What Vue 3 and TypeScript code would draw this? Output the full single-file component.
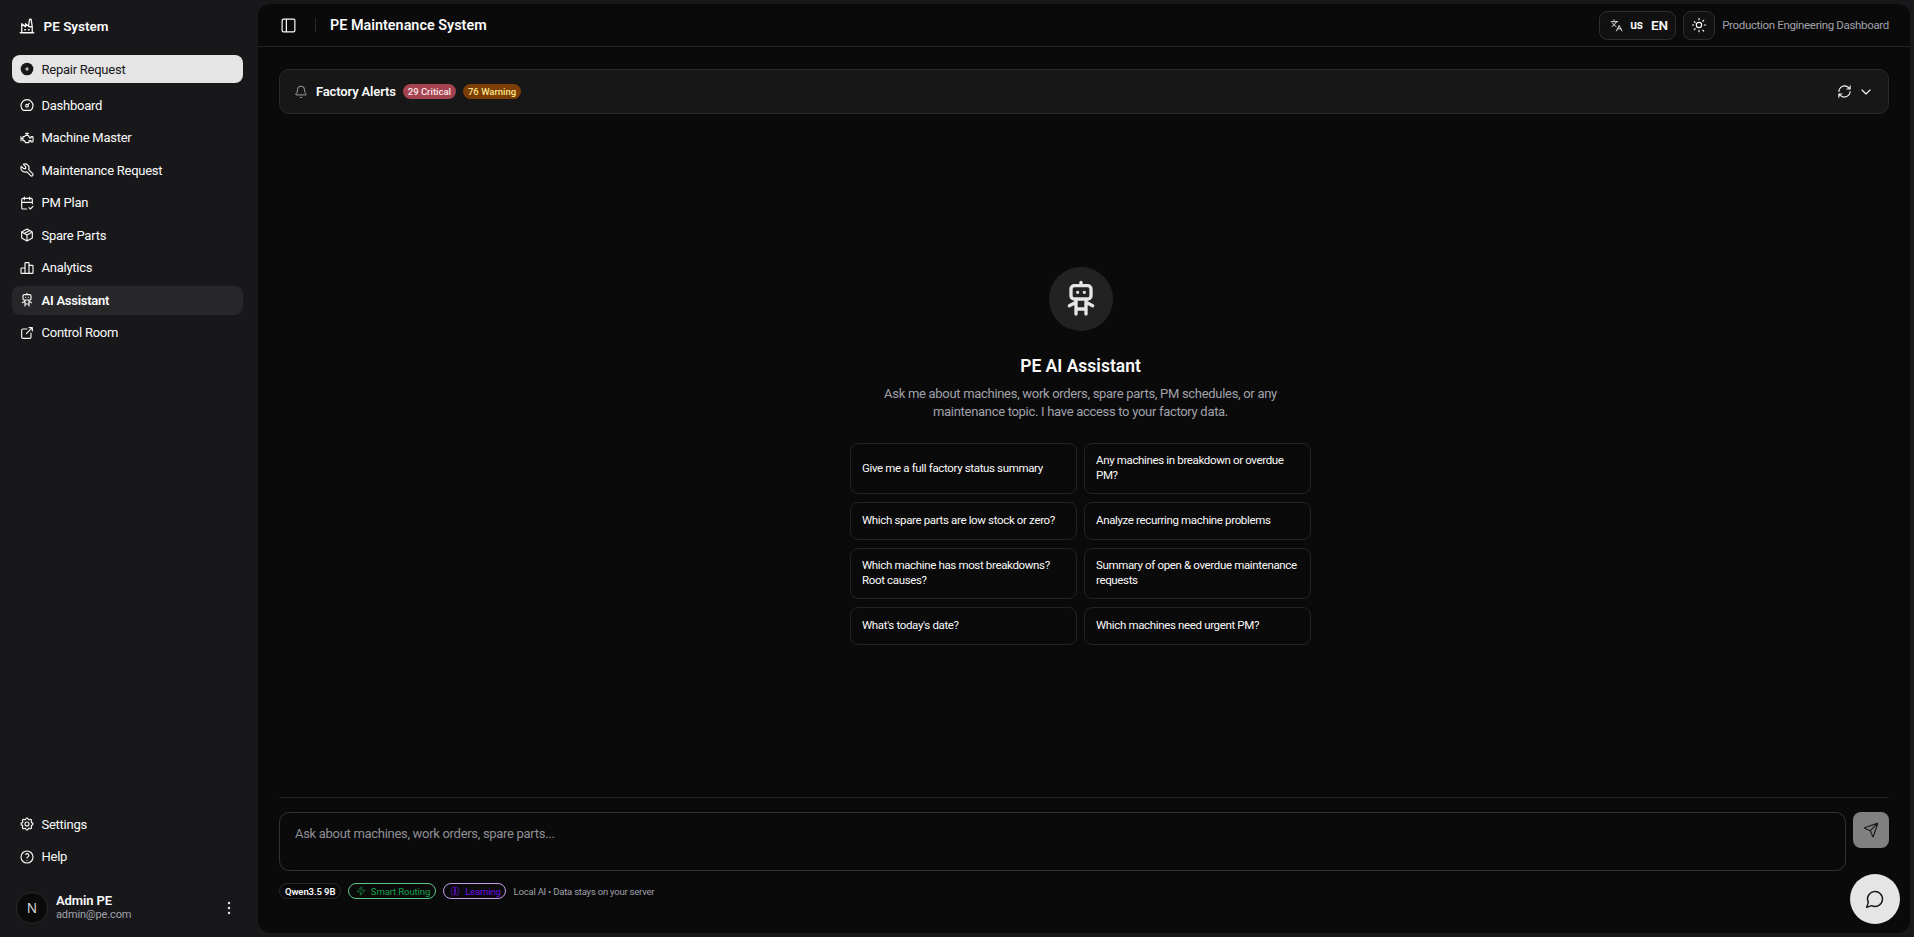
<script setup lang="ts">
const I = {
  factory: 'M3 21h18 M5 21v-12l5 4v-4l5 4h4 M19 21v-8l-1.436 -9.574a.5 .5 0 0 0 -.495 -.426h-1.145a.5 .5 0 0 0 -.494 .418l-1.43 8.582 M9 17h1 M14 17h1',
  dash: 'M10 13a2 2 0 1 0 4 0a2 2 0 0 0 -4 0 M13.45 11.55l2.05 -2.05 M6.4 20a9 9 0 1 1 11.2 0z',
  engine: 'M3 10v6 M12 5v3 M10 5h4 M5 13h-2 M6 10h2l2 -2h3.382a1 1 0 0 1 .894 .553l1.448 2.894a1 1 0 0 0 .894 .553h1.382v-2h2a1 1 0 0 1 1 1v6a1 1 0 0 1 -1 1h-2v-2h-3v2a1 1 0 0 1 -1 1h-3.465a1 1 0 0 1 -.832 -.445l-1.703 -2.555h-2v-6z',
  tool: 'M7 10h3v-3l-3.5 -3.5a6 6 0 0 1 8 8l6 6a2 2 0 0 1 -3 3l-6 -6a6 6 0 0 1 -8 -8l3.5 3.5',
  cal: 'M11.5 21h-5.5a2 2 0 0 1 -2 -2v-12a2 2 0 0 1 2 -2h12a2 2 0 0 1 2 2v6 M16 3v4 M8 3v4 M4 11h16 M15 19l2 2l4 -4',
  pkg: 'M12 3l8 4.5l0 9l-8 4.5l-8 -4.5l0 -9l8 -4.5 M12 12l8 -4.5 M12 12l0 9 M12 12l-8 -4.5 M16 5.25l-8 4.5',
  chart: 'M3 13a1 1 0 0 1 1 -1h4a1 1 0 0 1 1 1v6a1 1 0 0 1 -1 1h-4a1 1 0 0 1 -1 -1z M15 9a1 1 0 0 1 1 -1h4a1 1 0 0 1 1 1v10a1 1 0 0 1 -1 1h-4a1 1 0 0 1 -1 -1z M9 5a1 1 0 0 1 1 -1h4a1 1 0 0 1 1 1v14a1 1 0 0 1 -1 1h-4a1 1 0 0 1 -1 -1z M4 20h14',
  robot: 'M6 6a2 2 0 0 1 2 -2h8a2 2 0 0 1 2 2v4a2 2 0 0 1 -2 2h-8a2 2 0 0 1 -2 -2z M12 2v2 M9 12v9 M15 12v9 M5 16l4 -2 M15 14l4 2 M9 18h6 M10 8v.01 M14 8v.01',
  ext: 'M12 6h-6a2 2 0 0 0 -2 2v10a2 2 0 0 0 2 2h10a2 2 0 0 0 2 -2v-6 M11 13l9 -9 M15 4h5v5',
  gear: 'M10.325 4.317c.426 -1.756 2.924 -1.756 3.35 0a1.724 1.724 0 0 0 2.573 1.066c1.543 -.94 3.31 .826 2.37 2.37a1.724 1.724 0 0 0 1.065 2.572c1.756 .426 1.756 2.924 0 3.35a1.724 1.724 0 0 0 -1.066 2.573c.94 1.543 -.826 3.31 -2.37 2.37a1.724 1.724 0 0 0 -2.572 1.065c-.426 1.756 -2.924 1.756 -3.35 0a1.724 1.724 0 0 0 -2.573 -1.066c-1.543 .94 -3.31 -.826 -2.37 -2.37a1.724 1.724 0 0 0 -1.065 -2.572c-1.756 -.426 -1.756 -2.924 0 -3.35a1.724 1.724 0 0 0 1.066 -2.573c-.94 -1.543 .826 -3.31 2.37 -2.37c1 .608 2.296 .07 2.572 -1.065z M9 12a3 3 0 1 0 6 0a3 3 0 0 0 -6 0',
  help: 'M3 12a9 9 0 1 0 18 0a9 9 0 1 0 -18 0 M12 17v.01 M12 13.5a1.5 1.5 0 0 1 1 -1.5a2.6 2.6 0 1 0 -3 -4',
  panel: 'M5 3h14a2 2 0 0 1 2 2v14a2 2 0 0 1 -2 2h-14a2 2 0 0 1 -2 -2v-14a2 2 0 0 1 2 -2z M9 3v18',
  lang: 'm5 8 6 6 M4 14l6-6 2-3 M2 5h12 M7 2h1 M22 22l-5-10-5 10 M14 18h6',
  sun: 'M8 12a4 4 0 1 0 8 0a4 4 0 1 0 -8 0 M12 2v2 M12 20v2 m-7.07-15.07 1.41 1.41 m11.32 11.32 1.41 1.41 M2 12h2 M20 12h2 m-15.66 5.66-1.41 1.41 M19.07 4.93l-1.41 1.41',
  bell: 'M10.268 21a2 2 0 0 0 3.464 0 M3.262 15.326A1 1 0 0 0 4 17h16a1 1 0 0 0 .74-1.673C19.41 13.956 18 12.499 18 8A6 6 0 0 0 6 8c0 4.499-1.411 5.956-2.738 7.326',
  refresh: 'M3 12a9 9 0 0 1 9-9 9.75 9.75 0 0 1 6.74 2.74L21 8 M21 3v5h-5 M21 12a9 9 0 0 1-9 9 9.75 9.75 0 0 1-6.74-2.74L3 16 M8 16H3v5',
  chev: 'm6 9 6 6 6-6',
  send: 'M14.536 21.686a.5.5 0 0 0 .937-.024l6.5-19a.496.496 0 0 0-.635-.635l-19 6.5a.5.5 0 0 0-.024.937l7.93 3.18a2 2 0 0 1 1.112 1.11z m7.318-19.539-10.94 10.939',
  zap: 'M4 14a1 1 0 0 1-.78-1.63l9.9-10.2a.5.5 0 0 1 .86.46l-1.92 6.02A1 1 0 0 0 13 10h7a1 1 0 0 1 .78 1.63l-9.9 10.2a.5.5 0 0 1-.86-.46l1.92-6.02A1 1 0 0 0 11 14z',
  brain: 'M12 5a3 3 0 1 0-5.997.125 4 4 0 0 0-2.526 5.77 4 4 0 0 0 .556 6.588A4 4 0 1 0 12 18Z M12 5a3 3 0 1 1 5.997.125 4 4 0 0 1 2.526 5.77 4 4 0 0 1-.556 6.588A4 4 0 1 1 12 18Z M15 13a4.5 4.5 0 0 1-3-4 4.5 4.5 0 0 1-3 4',
  msg: 'M7.9 20A9 9 0 1 0 4 16.1L2 22Z'
}

const nav = [
  { label: 'Dashboard', icon: I.dash },
  { label: 'Machine Master', icon: I.engine },
  { label: 'Maintenance Request', icon: I.tool },
  { label: 'PM Plan', icon: I.cal },
  { label: 'Spare Parts', icon: I.pkg },
  { label: 'Analytics', icon: I.chart },
  { label: 'AI Assistant', icon: I.robot, active: true },
  { label: 'Control Room', icon: I.ext }
]
const foot = [
  { label: 'Settings', icon: I.gear },
  { label: 'Help', icon: I.help }
]
const prompts = [
  'Give me a full factory status summary',
  'Any machines in breakdown or overdue PM?',
  'Which spare parts are low stock or zero?',
  'Analyze recurring machine problems',
  'Which machine has most breakdowns? Root causes?',
  'Summary of open & overdue maintenance requests',
  "What's today's date?",
  'Which machines need urgent PM?'
]
</script>

<template>
  <div class="shell">
    <aside class="side">
      <div class="brand">
        <svg class="ic brand-ic" viewBox="0 0 24 24"><path :d="I.factory" /></svg>
        <span>PE System</span>
      </div>
      <button class="repair">
        <svg class="ic" viewBox="0 0 24 24">
          <circle cx="12" cy="12" r="9.5" fill="#18181b" stroke="none" />
          <path d="M12 10v4 M10 12h4" stroke="#e5e5e5" />
        </svg>
        <span>Repair Request</span>
      </button>
      <nav class="nav">
        <a v-for="n in nav" :key="n.label" class="item" :class="{ active: n.active }">
          <svg class="ic" viewBox="0 0 24 24"><path :d="n.icon" /></svg>
          <span>{{ n.label }}</span>
        </a>
      </nav>
      <nav class="nav foot">
        <a v-for="n in foot" :key="n.label" class="item">
          <svg class="ic" viewBox="0 0 24 24"><path :d="n.icon" /></svg>
          <span>{{ n.label }}</span>
        </a>
      </nav>
      <div class="user">
        <div class="avatar">N</div>
        <div class="who">
          <strong>Admin PE</strong>
          <small>admin@pe.com</small>
        </div>
        <svg class="dots" viewBox="0 0 4 16"><circle cx="2" cy="3" r="1.2" /><circle cx="2" cy="8" r="1.2" /><circle cx="2" cy="13" r="1.2" /></svg>
      </div>
    </aside>

    <main class="main">
      <header class="top">
        <svg class="ic panel" viewBox="0 0 24 24"><path :d="I.panel" /></svg>
        <i class="sep"></i>
        <h1>PE Maintenance System</h1>
        <div class="top-right">
          <button class="lang">
            <svg class="ic" viewBox="0 0 24 24"><path :d="I.lang" /></svg>
            <span class="us">us</span>
            <span class="en">EN</span>
          </button>
          <button class="theme">
            <svg class="ic" viewBox="0 0 24 24"><path :d="I.sun" /></svg>
          </button>
          <span class="sub">Production Engineering Dashboard</span>
        </div>
      </header>

      <section class="body">
        <div class="alerts">
          <svg class="ic bell" viewBox="0 0 24 24"><path :d="I.bell" /></svg>
          <span class="a-title">Factory Alerts</span>
          <span class="badge crit">29 Critical</span>
          <span class="badge warn">76 Warning</span>
          <div class="a-right">
            <svg class="ic refresh" viewBox="0 0 24 24"><path :d="I.refresh" /></svg>
            <svg class="ic" viewBox="0 0 24 24"><path :d="I.chev" /></svg>
          </div>
        </div>

        <div class="center">
          <div class="bot">
            <svg viewBox="0 0 24 24"><path :d="I.robot" /></svg>
          </div>
          <h2>PE AI Assistant</h2>
          <p>Ask me about machines, work orders, spare parts, PM schedules, or any maintenance topic. I have access to your factory data.</p>
          <div class="grid">
            <button v-for="p in prompts" :key="p" class="prompt">{{ p }}</button>
          </div>
        </div>

        <div class="composer">
          <div class="row">
            <div class="input">Ask about machines, work orders, spare parts...</div>
            <button class="sendb">
              <svg class="ic" viewBox="0 0 24 24"><path :d="I.send" /></svg>
            </button>
          </div>
          <div class="meta">
            <span class="pill q">Qwen3.5 9B</span>
            <span class="pill g"><svg class="ic" viewBox="0 0 24 24"><path :d="I.zap" /></svg>Smart Routing</span>
            <span class="pill p"><svg class="ic" viewBox="0 0 24 24"><path :d="I.brain" /></svg>Learning</span>
            <span class="note">Local AI • Data stays on your server</span>
          </div>
        </div>
      </section>

      <button class="fab">
        <svg class="ic" viewBox="0 0 24 24"><path :d="I.msg" /></svg>
      </button>
    </main>
  </div>
</template>

<style>
html, body { margin: 0; background: #18181b; }
</style>

<style scoped>
.shell {
  display: flex;
  height: 937px;
  background: #18181b;
  color: #fafafa;
  font-family: Roboto, "Noto Sans", sans-serif;
  overflow: hidden;
}
button { font: inherit; color: inherit; padding: 0; border: 0; background: none; }
.ic {
  width: 16px; height: 16px; flex: none;
  fill: none; stroke: currentColor; stroke-width: 1.7;
  stroke-linecap: round; stroke-linejoin: round;
}

.side { width: 258px; flex: none; display: flex; flex-direction: column; box-sizing: border-box; padding: 0 15px 0 12px; }
.brand { display: flex; align-items: center; gap: 7.5px; height: 52px; padding-left: 6px; font-size: 13.5px; font-weight: 600; }
.brand-ic { width: 18px; height: 18px; }
.repair { display: flex; align-items: center; gap: 6.5px; height: 28px; margin-top: 3px; padding-left: 7px; background: #e5e5e5; color: #18181b; border-radius: 8px; font-size: 13px; letter-spacing: -0.25px; }
.nav { display: flex; flex-direction: column; gap: 4px; margin-top: 8px; }
.item { display: flex; align-items: center; gap: 6.5px; height: 28.5px; padding-left: 7px; border-radius: 8px; font-size: 13px; letter-spacing: -0.25px; color: #fafafa; }
.item.active { background: #27272a; font-weight: 600; }
.foot { margin-top: auto; }
.user { display: flex; align-items: center; height: 32px; margin: 21px 0 13px 4px; }
.avatar { width: 32px; height: 32px; border-radius: 50%; background: #0a0a0a; border: 1px solid #2a2a2a; box-sizing: border-box; display: flex; align-items: center; justify-content: center; font-size: 13px; font-weight: 300; font-family: Inter, sans-serif; }
.who { display: flex; flex-direction: column; margin-left: 8px; line-height: 14px; }
.who strong { font-size: 13px; font-weight: 600; letter-spacing: -0.1px; }
.who small { font-size: 11px; color: #a1a1aa; letter-spacing: -0.15px; }
.dots { width: 4px; height: 16px; margin-left: auto; margin-right: 12px; fill: #e5e5e5; }

.main { position: relative; flex: 1; margin: 4px 4px 4px 0; min-width: 0; background: #0a0a0a; border-radius: 12px; display: flex; flex-direction: column; }
.top { display: flex; align-items: center; height: 42px; flex: none; padding: 0 21px 0 22px; border-bottom: 1px solid #232323; }
.panel { width: 17px; height: 17px; }
.sep { width: 1px; height: 14px; background: #2a2a2a; margin: 0 14px 0 18px; }
h1 { margin: 0; font-size: 14.4px; font-weight: 600; }
.top-right { margin-left: auto; display: flex; align-items: center; gap: 7px; }
.lang, .theme { display: flex; align-items: center; height: 29px; border: 1px solid #2e2e2e; border-radius: 8px; background: #111; box-sizing: border-box; }
.lang { width: 77px; padding-left: 10px; gap: 7px; font-size: 12px; font-weight: 600; }
.lang .ic { width: 13px; height: 13px; }
.en { font-size: 13.5px; margin-left: 1px; }
.theme { width: 32px; justify-content: center; }
.sub { font-size: 11.5px; color: #a1a1aa; letter-spacing: -0.33px; }

.body { flex: 1; min-height: 0; display: flex; flex-direction: column; padding: 22px 21px 0; }
.alerts { display: flex; align-items: center; height: 45px; flex: none; box-sizing: border-box; padding: 0 14px; background: #171717; border: 1px solid #2a2a2a; border-radius: 10px; }
.bell { color: #a3a3a3; width: 14px; height: 14px; }
.a-title { margin-left: 8px; font-size: 13px; font-weight: 600; letter-spacing: -0.15px; }
.badge { margin-left: 7px; height: 15px; line-height: 15px; padding: 0 5px; border-radius: 8px; font-size: 9.5px; font-weight: 500; }
.crit { background: #a54451; color: #fbe9ea; }
.warn { background: #7c3d06; color: #fde68a; }
.a-right { margin-left: auto; display: flex; align-items: center; gap: 6px; }
.refresh { width: 15px; height: 15px; }

.center { flex: 1; min-height: 0; display: flex; flex-direction: column; align-items: center; justify-content: center; padding-right: 7px; }
.bot { width: 64px; height: 64px; border-radius: 50%; background: #222; display: flex; align-items: center; justify-content: center; }
.bot svg { width: 40px; height: 40px; fill: none; stroke: #e5e5e5; stroke-width: 2; stroke-linecap: round; stroke-linejoin: round; }
h2 { margin: 23px 0 0; font-size: 17.5px; line-height: 24px; font-weight: 600; }
.center p { margin: 7px 0 0; width: 420px; text-align: center; font-size: 13px; line-height: 18.5px; color: #a1a1aa; letter-spacing: -0.3px; }
.grid { width: 461px; margin-top: 21px; display: grid; grid-template-columns: 1fr 1fr; gap: 8px 7px; }
.prompt { box-sizing: border-box; min-height: 37.5px; padding: 9.75px 11px; text-align: left; font-size: 11.5px; line-height: 15px; letter-spacing: -0.35px; border: 1px solid #232323; border-radius: 8px; background: #0a0a0a; color: #fafafa; }

.composer { flex: none; border-top: 1px solid #232323; padding: 14px 0 34px; }
.row { display: flex; gap: 7px; align-items: flex-start; }
.input { flex: 1; height: 59px; box-sizing: border-box; padding: 11px 15px; border: 1px solid #333; border-radius: 10px; font-size: 13px; line-height: 19px; color: #8f8f96; letter-spacing: -0.3px; }
.sendb { width: 36px; height: 36px; flex: none; border-radius: 8px; background: #808080; color: #1a1a1a; display: flex; align-items: center; justify-content: center; }
.meta { display: flex; align-items: center; gap: 6.5px; margin-top: 12px; }
.pill { display: inline-flex; align-items: center; gap: 5px; height: 16px; box-sizing: border-box; padding: 0 5px; border: 1px solid #262626; border-radius: 8px; font-size: 9.5px; }
.pill .ic { width: 10px; height: 10px; }
.q { font-weight: 600; letter-spacing: -0.1px; }
.g { border-color: #5cc98a; color: #16a34a; padding: 0 5px 0 7px; letter-spacing: -0.1px; }
.p { border-color: #c4a0e8; color: #6d0fe8; padding: 0 4.5px 0 6.5px; letter-spacing: -0.15px; }
.note { font-size: 9.5px; color: #a1a1aa; margin-left: 1px; letter-spacing: -0.22px; }

.fab { position: absolute; right: 10px; bottom: 9px; width: 50px; height: 50px; border-radius: 50%; background: #e5e5e5; color: #18181b; display: flex; align-items: center; justify-content: center; }
.fab .ic { width: 20px; height: 20px; }
</style>
